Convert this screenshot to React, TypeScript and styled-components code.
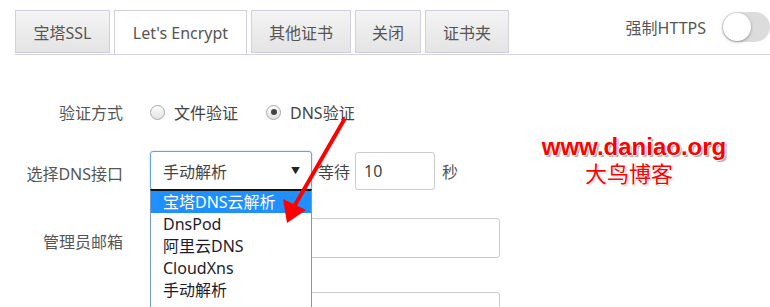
import React from "react";
import styled, { createGlobalStyle } from "styled-components";

const Global = createGlobalStyle`
  html, body { margin: 0; padding: 0; background: #fff; }
  body {
    width: 770px; height: 307px; overflow: hidden;
    font-family: "Noto Sans", "Noto Sans CJK SC", sans-serif;
    color: #555;
  }
  * { box-sizing: border-box; }
`;

const Page = styled.div`
  position: relative;
  width: 770px;
  height: 307px;
  overflow: hidden;
`;

const Header = styled.div`
  display: flex;
  align-items: flex-end;
  justify-content: space-between;
  margin: 11px 0 0 15px;
  border-bottom: 1px solid #d3d3e0;
  height: 44px;
`;

const Tabs = styled.div`
  display: flex;
  gap: 4px;
  height: 44px;
`;

const Tab = styled.div<{ $active?: boolean; $w: number }>`
  width: ${(p) => p.$w}px;
  height: ${(p) => (p.$active ? 44 : 43)}px;
  margin-bottom: ${(p) => (p.$active ? -1 : 0)}px;
  display: flex;
  align-items: center;
  justify-content: center;
  font-size: 16px;
  color: #555;
  border: 1px solid #cfcfdd;
  border-bottom: ${(p) => (p.$active ? "none" : "1px solid #cfcfdd")};
  background: ${(p) =>
    p.$active ? "#fff" : "linear-gradient(#f4f4f4, #e4e4e4)"};
`;

const Force = styled.div`
  display: flex;
  align-items: center;
  gap: 16px;
  align-self: flex-start;
  margin-top: 1px;
`;

const ForceLabel = styled.span`
  font-size: 16px;
  color: #555;
`;

const Track = styled.div`
  width: 48px;
  height: 30px;
  border-radius: 15px;
  background: #dcdcdc;
  display: flex;
  align-items: center;
  padding-left: 1px;
`;

const Knob = styled.div`
  width: 28px;
  height: 28px;
  border-radius: 50%;
  background: #fff;
  box-shadow: 0 1px 3px rgba(0, 0, 0, 0.35);
`;

const Form = styled.div`
  display: flex;
  flex-direction: column;
  padding-top: 42px;
`;

const Row = styled.div<{ $mt: number; $h: number }>`
  display: flex;
  align-items: center;
  margin-top: ${(p) => p.$mt}px;
  height: ${(p) => p.$h}px;
`;

const Label = styled.div<{ $dy?: number }>`
  width: 123px;
  margin-right: 27px;
  text-align: right;
  font-size: 16px;
  color: #555;
  position: relative;
  top: ${(p) => p.$dy ?? 0}px;
`;

const RadioGroup = styled.label`
  display: flex;
  align-items: center;
  gap: 9px;
  margin-right: 28px;
  font-size: 16px;
  color: #444;
`;

const RadioCircle = styled.span<{ $checked?: boolean }>`
  width: 15px;
  height: 15px;
  border-radius: 50%;
  border: 1px solid #a8a8a8;
  background: linear-gradient(#fdfdfd, #e2e2e2);
  display: flex;
  align-items: center;
  justify-content: center;
  &::after {
    content: "";
    display: ${(p) => (p.$checked ? "block" : "none")};
    width: 6px;
    height: 6px;
    border-radius: 50%;
    background: #444;
  }
`;

const SelectWrap = styled.div`
  position: relative;
  width: 162px;
  height: 39px;
`;

const SelectBox = styled.div`
  width: 162px;
  height: 39px;
  border: 1px solid #66a3e0;
  border-radius: 3px;
  box-shadow: 0 0 2px rgba(102, 163, 224, 0.6);
  display: flex;
  align-items: center;
  justify-content: space-between;
  padding: 0 11px 0 12px;
  font-size: 16px;
  color: #444;
`;

const Caret = styled.span`
  font-size: 9px;
  color: #222;
`;

const DropList = styled.div`
  position: absolute;
  left: 0;
  top: 38px;
  width: 162px;
  border-top: 2px solid #111;
  border-left: 1px solid #7a98c4;
  border-right: 1px solid #7a98c4;
  background: #fff;
  z-index: 5;
  padding-bottom: 8px;
`;

const Option = styled.div<{ $sel?: boolean }>`
  height: 22px;
  line-height: 22px;
  padding-left: 12px;
  font-size: 16px;
  color: ${(p) => (p.$sel ? "#fff" : "#1c1c2c")};
  background: ${(p) => (p.$sel ? "#1e90ff" : "transparent")};
`;

const Wait = styled.span`
  font-size: 16px;
  color: #444;
  margin: 0 5px 0 6px;
`;

const Input = styled.div<{ $w: number; $h: number }>`
  width: ${(p) => p.$w}px;
  height: ${(p) => p.$h}px;
  border: 1px solid #ccc;
  border-radius: 3px;
  display: flex;
  align-items: center;
  padding-left: 8px;
  font-size: 16px;
  color: #444;
`;

const Sec = styled.span`
  font-size: 16px;
  color: #555;
  margin-left: 7px;
`;

const Watermark = styled.div`
  position: absolute;
  left: 543px;
  top: 135px;
  width: 182px;
  display: flex;
  flex-direction: column;
  align-items: center;
  gap: 2px;
  color: #ff0000;
  z-index: 6;
`;

const WmUrl = styled.div`
  font-family: "Liberation Sans", Arial, sans-serif;
  font-weight: bold;
  font-size: 24px;
  line-height: 24px;
  text-shadow: 1px 0 0 #fff, -1px 0 0 #fff, 0 1px 0 #fff, 0 -1px 0 #fff,
    2px 2px 1px #aaa;
`;

const WmName = styled.div`
  font-family: "Noto Sans CJK SC", sans-serif;
  font-size: 22px;
  line-height: 22px;
  margin-left: -10px;
  text-shadow: 1px 0 0 #fff, -1px 0 0 #fff, 0 1px 0 #fff, 0 -1px 0 #fff,
    1px 1px 2px #aaa;
`;

const ArrowSvg = styled.svg`
  position: absolute;
  left: 0;
  top: 0;
  z-index: 7;
  pointer-events: none;
`;

export default function App() {
  return (
    <Page>
      <Global />
      <Header>
        <Tabs>
          <Tab $w={95}>宝塔SSL</Tab>
          <Tab $w={133} $active>
            Let's Encrypt
          </Tab>
          <Tab $w={100}>其他证书</Tab>
          <Tab $w={66}>关闭</Tab>
          <Tab $w={84}>证书夹</Tab>
        </Tabs>
        <Force>
          <ForceLabel>强制HTTPS</ForceLabel>
          <Track>
            <Knob />
          </Track>
        </Force>
      </Header>
      <Form>
        <Row $mt={0} $h={30}>
          <Label>验证方式</Label>
          <RadioGroup>
            <RadioCircle />
            文件验证
          </RadioGroup>
          <RadioGroup>
            <RadioCircle $checked />
            DNS验证
          </RadioGroup>
        </Row>
        <Row $mt={24} $h={39}>
          <Label $dy={2}>选择DNS接口</Label>
          <SelectWrap>
            <SelectBox>
              手动解析
              <Caret>▼</Caret>
            </SelectBox>
            <DropList>
              <Option $sel>宝塔DNS云解析</Option>
              <Option>DnsPod</Option>
              <Option>阿里云DNS</Option>
              <Option>CloudXns</Option>
              <Option>手动解析</Option>
            </DropList>
          </SelectWrap>
          <Wait>等待</Wait>
          <Input $w={80} $h={38}>10</Input>
          <Sec>秒</Sec>
        </Row>
        <Row $mt={28} $h={40}>
          <Label $dy={3}>管理员邮箱</Label>
          <Input $w={350} $h={40} />
        </Row>
        <Row $mt={34} $h={40}>
          <Label />
          <Input $w={350} $h={40} />
        </Row>
      </Form>
      <Watermark>
        <WmUrl>www.daniao.org</WmUrl>
        <WmName>大鸟博客</WmName>
      </Watermark>
      <ArrowSvg width="770" height="307" viewBox="0 0 770 307">
        <line x1="344" y1="120" x2="295" y2="205" stroke="#ff0000" strokeWidth="4" strokeLinecap="round" />
        <polygon points="287,223 283,199 306,210" fill="#ff0000" />
      </ArrowSvg>
    </Page>
  );
}
